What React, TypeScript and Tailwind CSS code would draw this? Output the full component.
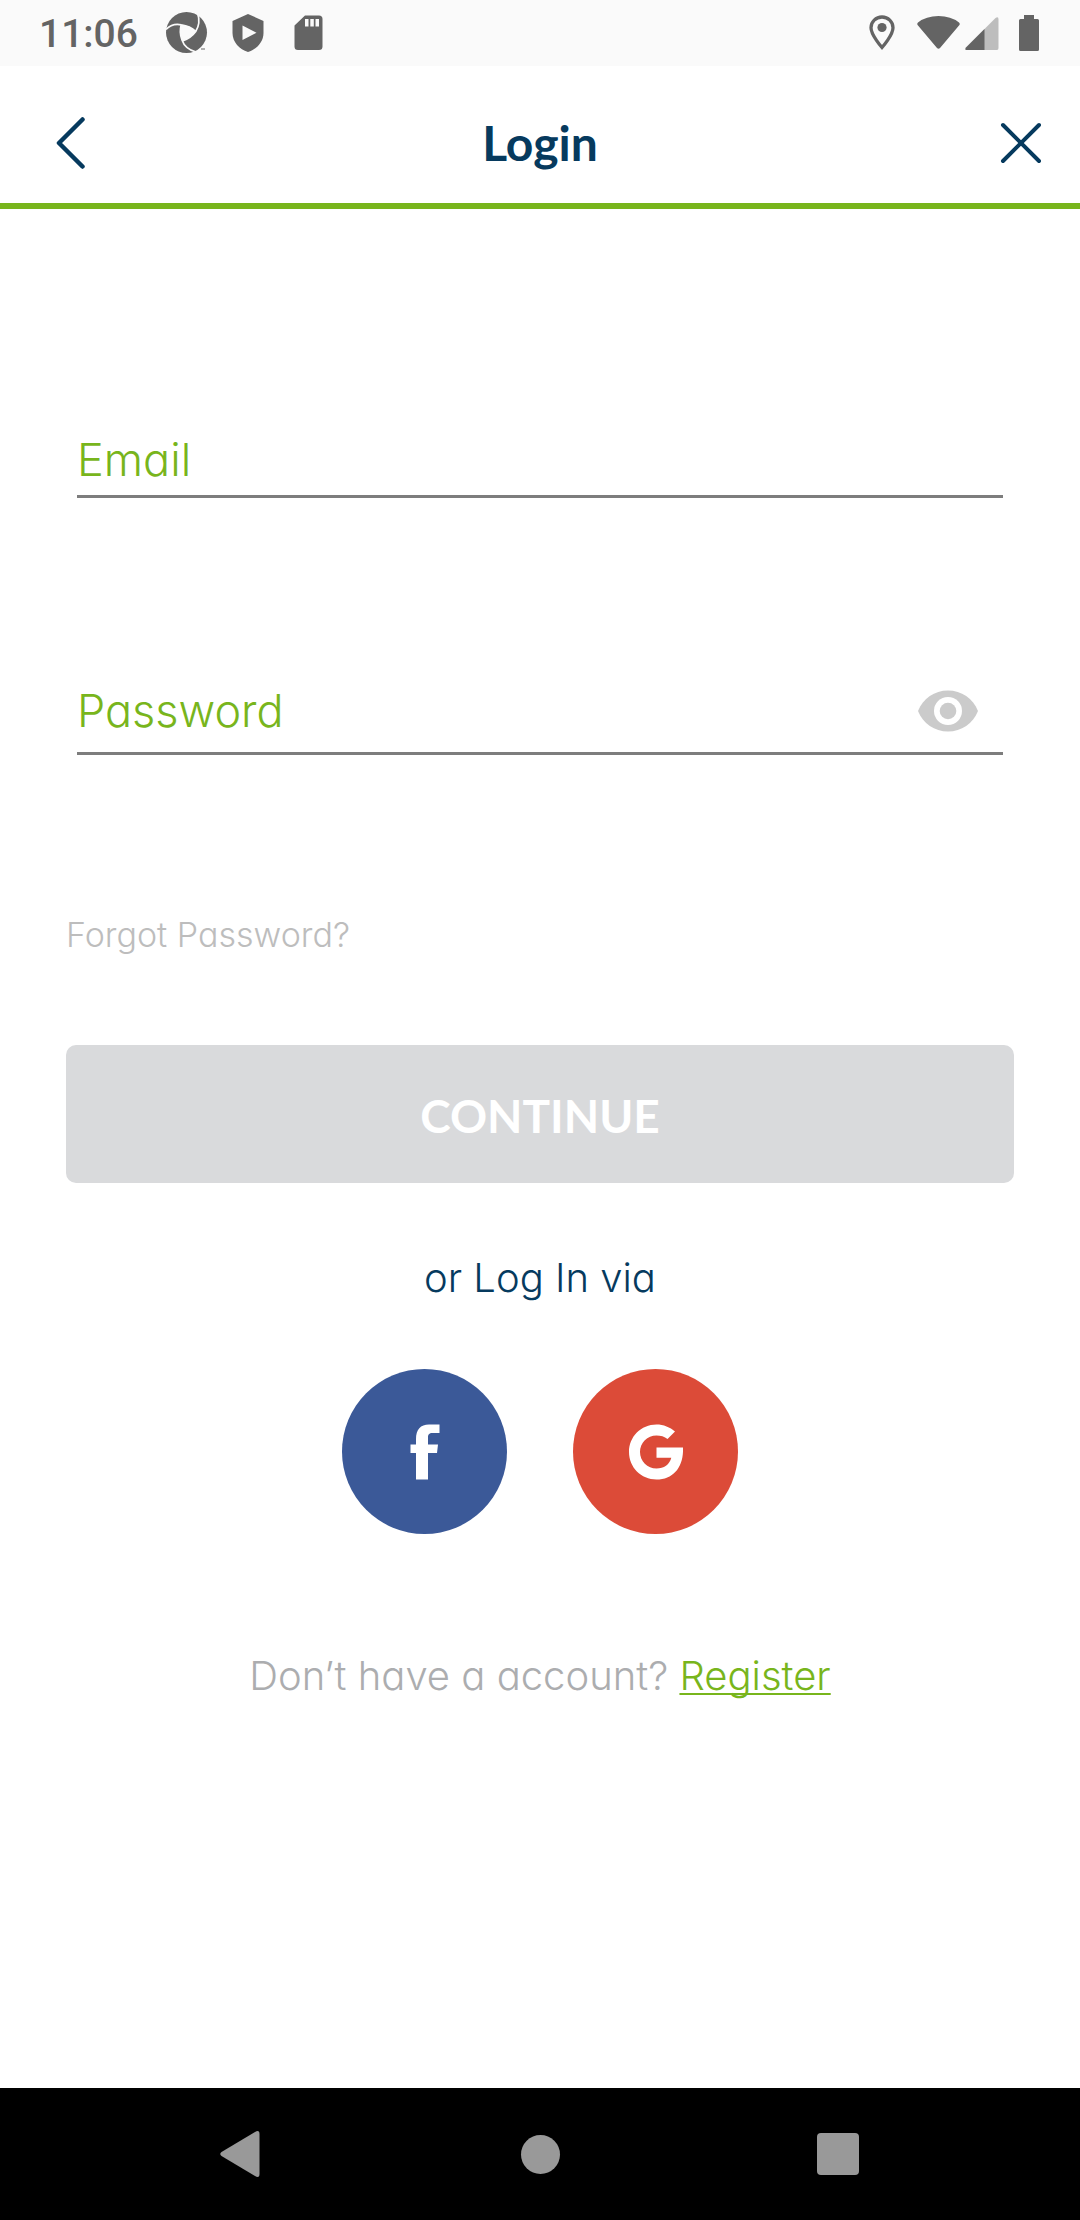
import { useState } from "react";
import type { ReactNode } from "react";

function StatusBar() {
  return (
    <div className="flex h-[66px] items-center justify-between bg-[#fafafa] pr-[41px] pl-[39px] text-[#646464]">
      <div className="flex items-center">
        <span className="pt-[2px] font-['Roboto',sans-serif] text-[39px] leading-[48px] font-medium">11:06</span>
        <svg className="ml-7 h-[42px] w-[42px]" viewBox="0 0 42 42" aria-hidden="true">
          <circle cx="20.5" cy="20.5" r="20.5" fill="currentColor" />
          <path d="M15.3 12.8Q24 13.5 29.7 19.4Q25 26 16.5 29Q13 20 15.3 12.8Z" fill="#fafafa" />
          <g fill="none" stroke="#fafafa" strokeWidth="1.7">
            <path d="M0 17.500Q6 11 15.300 12.800Q24 14 29.700 19.400" />
            <path d="M31.500 1Q35 11 29.700 19.500Q25 26 16.500 29" />
            <path d="M30 40Q19 37 16 28Q13 20 15.300 12.800" />
          </g>
          <path d="M35 37h4" stroke="currentColor" strokeWidth="1" />
        </svg>
        <svg className="ml-6 h-[38px] w-8" viewBox="0 0 32 38" fill="currentColor" aria-hidden="true">
          <path fillRule="evenodd" d="M16 0L31.500 7V19C31.500 28 24.500 35.500 16 38C7.500 35.500 0.500 28 0.500 19V7ZM10.500 11.500V26L24.500 18.700Z" />
        </svg>
        <svg className="ml-[30px] h-9 w-[29px]" viewBox="0 0 29 36" fill="currentColor" aria-hidden="true">
          <path fillRule="evenodd" d="M11 0.500H25Q28.500 0.500 28.500 4V31.500Q28.500 35 25 35H4Q0.500 35 0.500 31.500V10.500ZM11 4V11.500H14.500V4ZM16.300 4V11.500H19.800V4ZM21.500 4V11.500H25V4Z" />
        </svg>
      </div>
      <div className="flex items-center">
        <svg className="h-9 w-[26px]" viewBox="0 0 26 36" aria-hidden="true">
          <path d="M13 2C6.900 2 2 6.700 2 12.700C2 20 13 32.500 13 32.500S24 20 24 12.700C24 6.700 19.100 2 13 2Z" fill="none" stroke="currentColor" strokeWidth="3.300" />
          <circle cx="13" cy="12.500" r="4.600" fill="currentColor" />
        </svg>
        <svg className="ml-[22px] h-9 w-[43px]" viewBox="0 0 43 36" fill="currentColor" aria-hidden="true">
          <path d="M1 7.500Q9 1 21.500 1T42 7.500Q43.500 9 42 10.500L23 33Q21.500 34.500 20 33L1 10.500Q-0.500 9 1 7.500Z" />
        </svg>
        <svg className="ml-[5px] h-9 w-[34px]" viewBox="0 0 34 36" aria-hidden="true">
          <path d="M30.500 3Q33.500 1 33.500 4.500V33Q33.500 35 32 35H1.500Q-0.500 35 1 32.500Z" fill="#bdbdbd" />
          <path d="M19.500 14V35H1.500Q-0.500 35 1 32.500Z" fill="currentColor" />
        </svg>
        <svg className="ml-5 h-9 w-5" viewBox="0 0 20 36" fill="currentColor" aria-hidden="true">
          <path d="M5 0H15V4H18.500Q20 4 20 5.500V34.500Q20 36 18.500 36H1.500Q0 36 0 34.500V5.500Q0 4 1.500 4H5Z" />
        </svg>
      </div>
    </div>
  );
}

function Header() {
  return (
    <header className="grid h-[143px] grid-cols-[1fr_auto_1fr] items-center border-b-[6px] border-[#78b51c] px-[38px] pt-4 text-[#063a5e]">
      <button type="button" aria-label="Back" className="ml-4 justify-self-start">
        <svg className="h-[52px] w-8" viewBox="0 0 32 52" fill="none" stroke="currentColor" strokeWidth="4.500" strokeLinecap="round" strokeLinejoin="round">
          <path d="M28.500 2.500L5 26L28.500 49.500" />
        </svg>
      </button>
      <h1 className="font-['Lato',sans-serif] text-[48px] leading-[58px] font-bold">Login</h1>
      <button type="button" aria-label="Close" className="justify-self-end">
        <svg className="h-[42px] w-[42px]" viewBox="0 0 42 42" fill="none" stroke="currentColor" strokeWidth="4" strokeLinecap="round">
          <path d="M3 3L39 39M39 3L3 39" />
        </svg>
      </button>
    </header>
  );
}

type FieldProps = {
  id: string;
  label: string;
  type: string;
  className: string;
  children?: ReactNode;
};

function Field({ id, label, type, className, children }: FieldProps) {
  const [value, setValue] = useState("");
  return (
    <div className={`mx-[11px] flex items-center border-b-[3px] border-[#7d7d7d] text-[45px] leading-[52px] ${className}`}>
      <div className="grid flex-1">
        <label htmlFor={id} className={`col-start-1 row-start-1 text-[#78b51c] ${value ? "invisible" : ""}`}>
          {label}
        </label>
        <input
          id={id}
          type={type}
          value={value}
          onChange={(e) => setValue(e.target.value)}
          className="col-start-1 row-start-1 h-[52px] w-full bg-transparent text-[#063a5e] outline-none"
        />
      </div>
      {children}
    </div>
  );
}

function SocialIcons() {
  return (
    <div className="mt-[67px] flex justify-center gap-[66px]">
      <button type="button" aria-label="Log in with Facebook" className="flex size-[165px] items-center justify-center rounded-full bg-[#3b5998]">
        <svg className="h-14 w-[30px]" viewBox="0 0 30 56" fill="#fff">
          <path d="M6 55.500V29H0.500V20.500H6V15C6 5.500 10.500 0.500 19 0.500H29.500V9H22.500C19 9 18 10.500 18 13.500V20.500H28L27 29H18V55.500Z" />
        </svg>
      </button>
      <button type="button" aria-label="Log in with Google" className="flex size-[165px] items-center justify-center rounded-full bg-[#dc4b38]">
        <svg className="h-14 w-[54px]" viewBox="0 0 54 56" fill="#fff">
          <path d="M27.500 23.500H54C54.800 42 45 55.500 27.500 55.500C12 55.500 0 43.200 0 28S12 0.500 27.500 0.500C34.500 0.500 41 3.200 46 7.500L38.500 15C35.500 12.500 31.700 11.500 27.500 11.500C18.400 11.500 11 18.900 11 28S18.400 44.500 27.500 44.500C35 44.500 40.500 40.500 42.300 33.700H27.500Z" />
        </svg>
      </button>
    </div>
  );
}

function NavBar() {
  return (
    <nav className="grid h-[132px] grid-cols-[1fr_auto_1fr] items-center bg-black text-[#999]">
      <button type="button" aria-label="System back" className="mr-[261px] justify-self-end">
        <svg className="h-[46px] w-10" viewBox="0 0 40 46" fill="currentColor">
          <path d="M35 1Q39.500 -1.500 39.500 3V43Q39.500 47.500 35 45L1.500 25Q-1 23 1.500 21Z" />
        </svg>
      </button>
      <button type="button" aria-label="Home" className="size-[39px] rounded-full bg-current" />
      <button type="button" aria-label="Recent apps" className="ml-[257px] size-[42px] rounded-[4px] bg-current" />
    </nav>
  );
}

export default function App() {
  const [visible, setVisible] = useState(false);
  return (
    <div className="flex min-h-screen flex-col bg-white font-['Inter',sans-serif] font-light [font-feature-settings:'cv11']">
      <StatusBar />
      <Header />
      <main className="flex-1 px-[66px] pt-[225px]">
        <form onSubmit={(e) => e.preventDefault()}>
          <Field id="email" label="Email" type="email" className="pb-[9px]" />
          <Field id="password" label="Password" type={visible ? "text" : "password"} className="mt-[187px] pb-[15px]">
            <button type="button" aria-label="Show password" onClick={() => setVisible(!visible)} className="mr-6">
              <svg className="h-[42px] w-[62px]" viewBox="0 0 62 42" aria-hidden="true">
                <path d="M1 21C6 8.500 17.500 0.500 31 0.500S56 8.500 61 21C56 33.500 44.500 41.500 31 41.500S6 33.500 1 21Z" fill="#cbcbcb" />
                <circle cx="31" cy="21" r="14" fill="#fff" />
                <circle cx="31" cy="21" r="8.300" fill="#cbcbcb" />
              </svg>
            </button>
          </Field>
          <a href="#forgot" className="mt-[160px] block w-fit text-[34px] leading-10 text-[#bdbdbd]">
            Forgot Password?
          </a>
          <button type="submit" className="mt-[90px] flex h-[138px] w-full items-center justify-center rounded-[10px] bg-[#d9dadc] pt-1 font-['Lato',sans-serif] text-[46px] leading-[58px] font-bold text-white">
            CONTINUE
          </button>
        </form>
        <p className="mt-[71px] text-center text-[40px] leading-[48px] text-[#063a5e]">or Log In via</p>
        <SocialIcons />
        <p className="mt-[118px] text-center text-[40px] leading-[48px] text-[#acadaf]">
          Don’t have a account?{" "}
          <a href="#register" className="text-[#78b51c] underline decoration-2 underline-offset-[3px] [text-decoration-skip-ink:none]">
            Register
          </a>
        </p>
      </main>
      <NavBar />
    </div>
  );
}
